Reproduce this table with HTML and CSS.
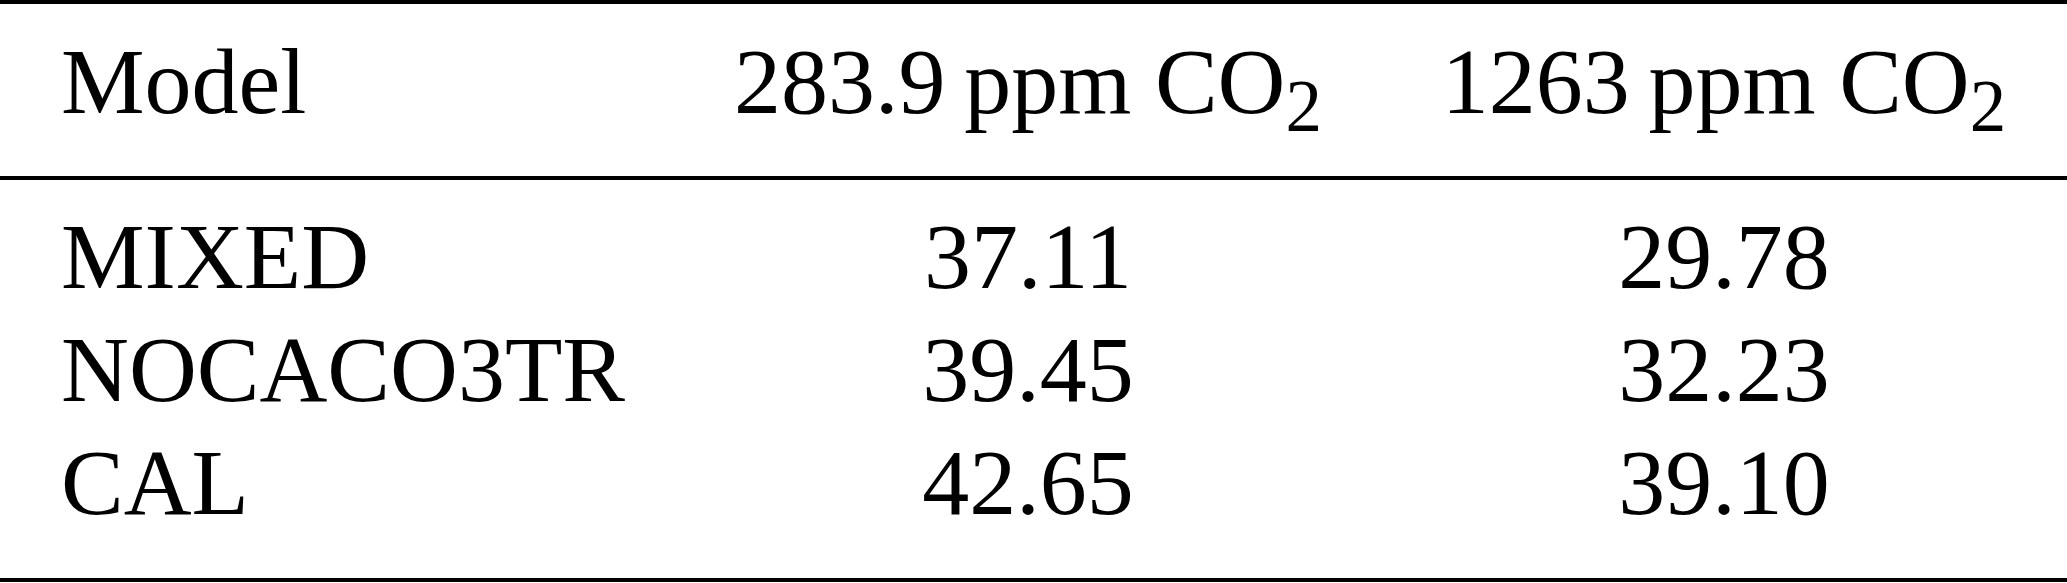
FILE: index.html
```html
<!DOCTYPE html>
<html lang="en">
<head>
<meta charset="utf-8">
<title>Model table</title>
<link rel="stylesheet" href="styles.css">
</head>
<body>
<table class="results">
  <colgroup>
    <col class="col-model">
    <col class="col-val">
    <col class="col-val2">
  </colgroup>
  <thead>
    <tr>
      <th class="name">Model</th>
      <th class="num">283.9&#8201;ppm CO<sub class="sub">2</sub></th>
      <th class="num">1263&#8201;ppm CO<sub class="sub">2</sub></th>
    </tr>
  </thead>
  <tbody>
    <tr>
      <td class="name">MIXED</td>
      <td class="num">37.11</td>
      <td class="num">29.78</td>
    </tr>
    <tr>
      <td class="name">NOCACO3TR</td>
      <td class="num">39.45</td>
      <td class="num">32.23</td>
    </tr>
    <tr>
      <td class="name">CAL</td>
      <td class="num">42.65</td>
      <td class="num">39.10</td>
    </tr>
  </tbody>
</table>
</body>
</html>
```

FILE: styles.css
```css
html, body {
  margin: 0;
  padding: 0;
  background: #ffffff;
}

body {
  font-family: "Liberation Serif", "Times New Roman", serif;
  color: #000000;
}

.results {
  width: 2067px;
  table-layout: fixed;
  border-collapse: separate;
  border-spacing: 0;
  border-top: 4px solid #000;
  border-bottom: 4px solid #000;
  font-size: 94px;
  line-height: 113px;
}

.col-model { width: 675px; }
.col-val { width: 706px; }
.col-val2 { width: 686px; }

.results th,
.results td {
  padding: 0;
  white-space: nowrap;
  font-weight: normal;
}

.results th {
  padding-top: 21px;
  padding-bottom: 38px;
  border-bottom: 4px solid #000;
}

.results tbody tr:first-child td {
  padding-top: 20px;
}

.results tbody tr:last-child td {
  padding-bottom: 39px;
}

.name {
  text-align: left;
  padding-left: 61px !important;
}

.num {
  text-align: center;
}

.sub {
  font-size: 73px;
  line-height: 0;
  vertical-align: -18px;
}
```
